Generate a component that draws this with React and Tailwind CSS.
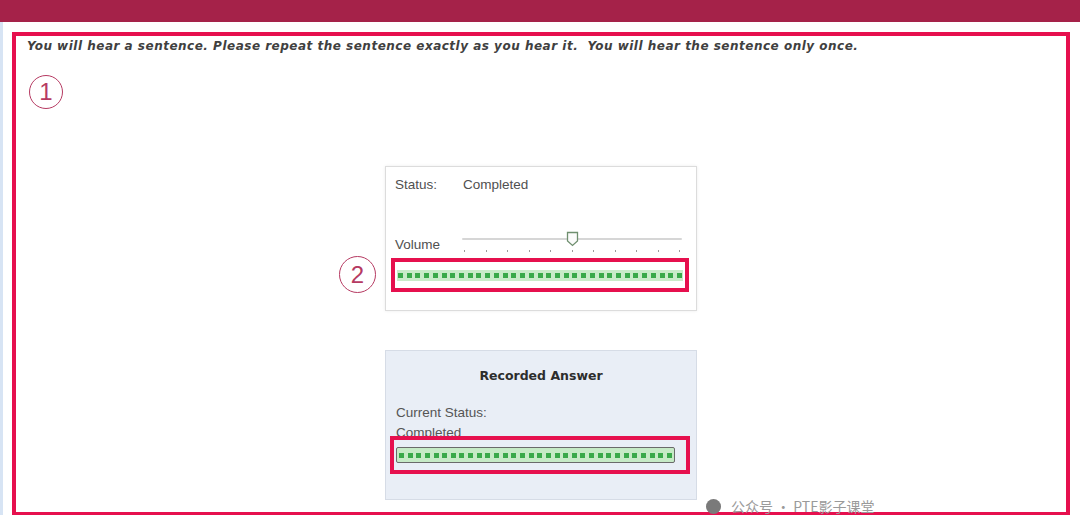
import React from "react";

const sans = { fontFamily: '"Liberation Sans", Arial, sans-serif' };

function Dots({ count }) {
  return Array.from({ length: count }).map((_, i) => (
    <span key={i} className="block w-[5px] h-[5px] bg-[#3aa94a] shrink-0" />
  ));
}

function Circled({ n, className }) {
  return (
    <div
      className={`flex items-center justify-center rounded-full border-[1.5px] border-[#b63a62] text-[#b63a62] font-['Liberation_Sans',Arial,sans-serif] text-[24px] leading-none ${className}`}
    >
      {n}
    </div>
  );
}

function Slider() {
  return (
    <div className="relative w-[220px] h-[24px]">
      <div className="absolute left-0 right-0 top-[8px] h-[2px] bg-[#d6d6d6] rounded" />
      <div className="absolute left-[2px] right-[2px] top-[20px] flex justify-between">
        {Array.from({ length: 11 }).map((_, i) => (
          <span key={i} className="block w-[1px] h-[2px] bg-[#9a9a9a]" />
        ))}
      </div>
      <svg className="absolute left-[104px] top-[1px]" width="13" height="16" viewBox="0 0 13 16">
        <path d="M1.5 1.5 H11.5 V10 L6.5 14.5 L1.5 10 Z" fill="#fbfbfb" stroke="#6f8f6f" strokeWidth="1.3" />
      </svg>
    </div>
  );
}

export default function App() {
  return (
    <div className="relative w-[1080px] h-[515px] overflow-hidden bg-white" style={sans}>
      <div className="h-[22px] bg-[#a52249]" />
      <div className="absolute left-0 top-[22px] bottom-0 w-[3px] bg-[#d7e4f4]" />

      <div className="pl-[12px] pr-[10px] pt-[10px]">
        <div className="h-[484px] border-4 border-[#e6104e] px-[11px] pt-[3px]">
          <p className="text-[12px] leading-[15px] font-bold italic text-[#404040] font-['DejaVu_Sans',Verdana,sans-serif] tracking-[0.5px]">
            You will hear a sentence. Please repeat the sentence exactly as you hear it.&nbsp; You will hear the sentence only once.
          </p>

          <Circled n="1" className="w-[34px] h-[34px] mt-[21px] ml-[2px]" />

          <div className="flex flex-col items-center mt-[57px]">
            <div className="relative w-[312px] h-[145px] bg-white border border-[#dcdcdc] shadow-[0_0_3px_rgba(0,0,0,0.08)] pl-[9px] pt-[9px]">
              <div className="flex text-[13.5px] text-[#505050] leading-[18px]">
                <span className="w-[68px]">Status:</span>
                <span>Completed</span>
              </div>
              <div className="flex mt-[36px]">
                <span className="w-[67px] text-[13.5px] text-[#505050] leading-[18px] mt-[6px]">Volume</span>
                <Slider />
              </div>
              <Circled n="2" className="absolute left-[-47px] top-[89px] w-[37px] h-[37px]" />
              <div className="absolute left-[5px] top-[91px] w-[298px] h-[34px] border-4 border-[#e6104e] flex items-center px-[2px]">
                <div className="w-full h-[11px] bg-[#c9ebc9] flex items-center justify-between px-[1px]">
                  <Dots count={33} />
                </div>
              </div>
            </div>

            <div className="relative w-[312px] h-[150px] mt-[39px] bg-[#e9eef6] border border-[#d6dce6] pt-[16px] pl-[10px]">
              <p className="text-center pr-[10px] text-[12.5px] font-bold text-[#2d2d2d] leading-[18px] font-['DejaVu_Sans',Verdana,sans-serif]">
                Recorded Answer
              </p>
              <p className="mt-[19px] text-[13.5px] text-[#555] leading-[18px]">Current Status:</p>
              <p className="mt-[2px] text-[13.5px] text-[#555] leading-[18px]">Completed</p>
              <div className="absolute left-[4px] top-[85px] w-[300px] h-[38px] border-4 border-[#e6104e] flex items-center pl-[2px] pr-[11px]">
                <div className="w-full h-[16px] bg-[#c6eac6] border border-[#6a6a6a] rounded-[2px] flex items-center justify-between px-[2px] overflow-hidden">
                  <Dots count={32} />
                </div>
              </div>
            </div>
          </div>
        </div>
      </div>

      <div className="absolute left-[706px] top-[499px] flex items-center gap-[10px] text-[#9a9a9a] text-[14px] leading-[15px] font-['Noto_Sans_CJK_SC',sans-serif]">
        <span className="block w-[15px] h-[15px] rounded-full bg-[#7a7a7a]" />
        <span>公众号 · PTE影子课堂</span>
      </div>
    </div>
  );
}
